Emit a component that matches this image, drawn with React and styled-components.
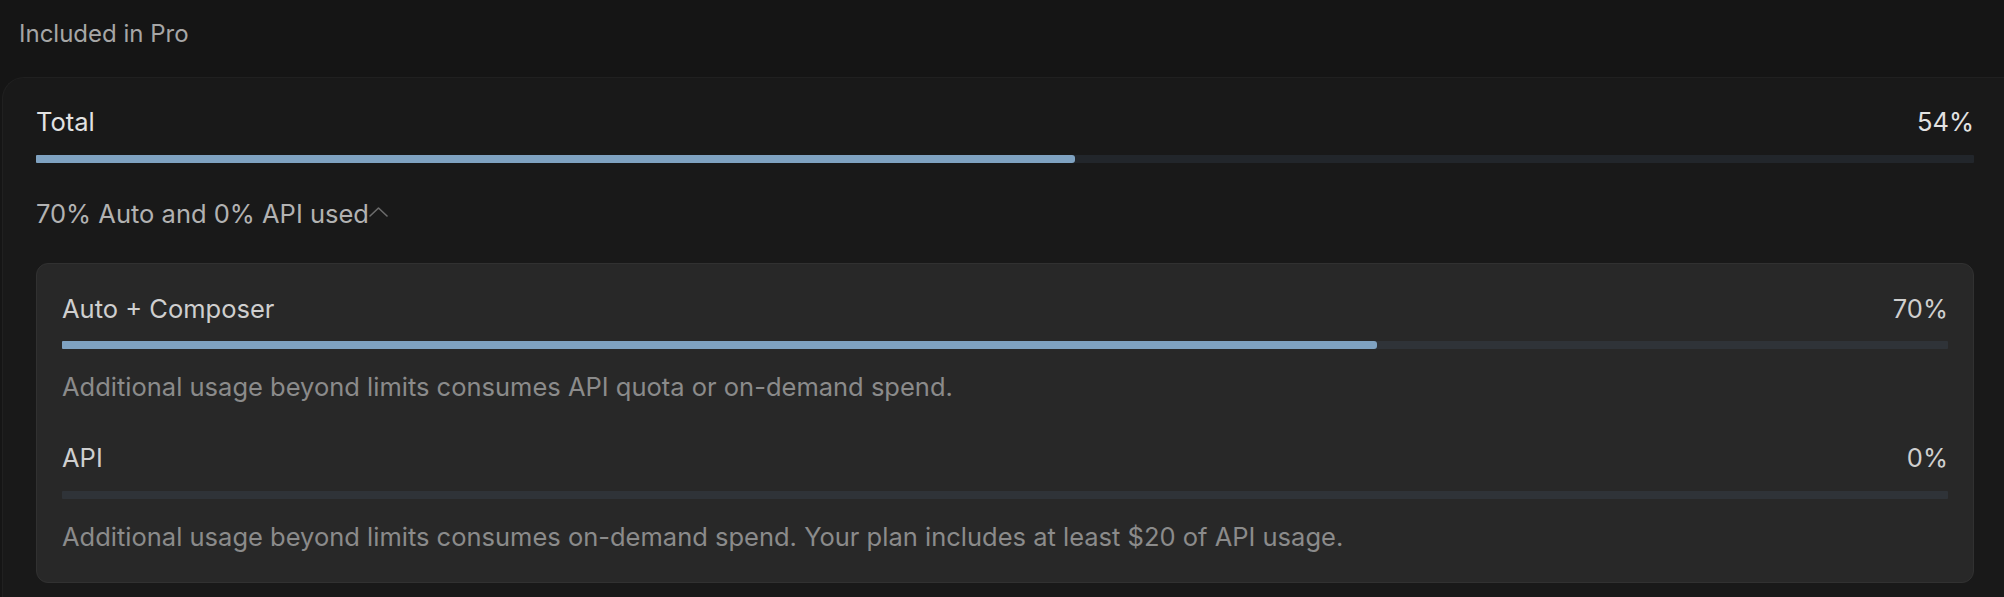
import styled, { createGlobalStyle } from "styled-components";

const GlobalStyle = createGlobalStyle`
  html, body {
    margin: 0;
    padding: 0;
    background: #151515;
  }
  body {
    font-family: Inter, "Noto Sans", "Liberation Sans", sans-serif;
    -webkit-font-smoothing: antialiased;
  }
`;

const Page = styled.div`
  padding: 18px 0 0 2px;
`;

const SectionTitle = styled.div`
  padding-left: 17px;
  font-size: 24px;
  line-height: 32px;
  color: #a6a6a6;
`;

const Card = styled.section`
  margin-top: 27px;
  background: #191919;
  border: 1px solid #202020;
  border-right: none;
  border-radius: 22px 0 0 0;
  padding: 28px 30px 30px 33px;
`;

const Row = styled.div`
  display: flex;
  justify-content: space-between;
  align-items: center;
  font-size: 25.5px;
  line-height: 32px;
  color: ${(p) => (p.$strong ? "#e2e2e2" : "#cfcfcf")};
`;

const Track = styled.div`
  margin-top: ${(p) => p.$gap || 16}px;
  height: 8px;
  background: ${(p) => p.$track};
  border-radius: 1px;
  overflow: hidden;
`;

const Fill = styled.div`
  height: 100%;
  background: #7fa2c1;
  border-radius: 0 3px 3px 0;
`;

const Toggle = styled.div`
  margin-top: 35px;
  display: inline-flex;
  align-items: center;
  font-size: 25.5px;
  line-height: 32px;
  color: #b2b2b2;

  svg {
    margin-top: -4px;
  }
`;

const SubCard = styled.div`
  margin-top: 33px;
  background: #282828;
  border: 1px solid #313131;
  border-radius: 12px;
  padding: 29px 25px 29px 25px;
`;

const Note = styled.p`
  margin: 22px 0 0;
  font-size: 25.5px;
  line-height: 32px;
  color: #8b8b8b;
`;

const Item = styled.div`
  & + & {
    margin-top: 39px;
  }
`;

function Meter({ label, value, width, track, gap, strong }) {
  return (
    <>
      <Row $strong={strong}>
        <span>{label}</span>
        <span>{value}</span>
      </Row>
      <Track $track={track} $gap={gap}>
        {width > 0 && <Fill style={{ width: `${width}%` }} />}
      </Track>
    </>
  );
}

const ChevronUp = () => (
  <svg width="19" height="10" viewBox="0 0 19 10" fill="none">
    <polyline
      points="1,9 9.5,1 18,9"
      stroke="#6c6c6c"
      strokeWidth="1.6"
      strokeLinecap="round"
      strokeLinejoin="round"
    />
  </svg>
);

export default function App() {
  return (
    <Page>
      <GlobalStyle />
      <SectionTitle>Included in Pro</SectionTitle>
      <Card>
        <Meter label="Total" value="54%" width={53.6} track="#22262b" gap={17} strong />
        <Toggle>
          70% Auto and 0% API used
          <ChevronUp />
        </Toggle>
        <SubCard>
          <Item>
            <Meter label="Auto + Composer" value="70%" width={69.7} track="#2f3338" />
            <Note>Additional usage beyond limits consumes API quota or on-demand spend.</Note>
          </Item>
          <Item>
            <Meter label="API" value="0%" width={0} track="#2f3338" gap={17} />
            <Note>
              Additional usage beyond limits consumes on-demand spend. Your plan includes at least $20 of API usage.
            </Note>
          </Item>
        </SubCard>
      </Card>
    </Page>
  );
}
